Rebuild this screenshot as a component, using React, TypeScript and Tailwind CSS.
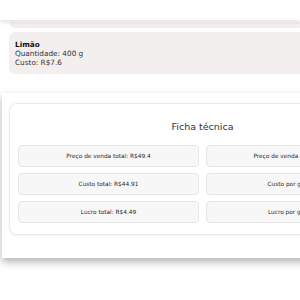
export default function App() {
  const stats = [
    ["Preço de venda total: R$49.4", "Preço de venda por g: R$0.12"],
    ["Custo total: R$44.91", "Custo por g: R$0.11"],
    ["Lucro total: R$4.49", "Lucro por g: R$0.01"],
  ];

  return (
    <div className="relative h-[300px] w-[300px] overflow-hidden bg-white font-['DejaVu_Sans',sans-serif] text-[#222]">
      {/* cabeçalho fixo */}
      <div className="relative z-10 h-[20px] w-full bg-white shadow-[0_2px_4px_rgba(0,0,0,0.12)]" />

      {/* fim do ingrediente anterior */}
      <div className="ml-[9px] mt-[2px] h-[6px] w-[400px] rounded-b-md bg-[#f3efee]" />

      {/* ingrediente */}
      <div className="ml-[9px] mt-[4px] flex h-[42px] w-[400px] flex-col justify-center rounded-md bg-[#f3efee] px-[6px] text-[7.3px] leading-[9px]">
        <span className="font-bold text-[#111]">Limão</span>
        <span className="text-[#333]">Quantidade: 400 g</span>
        <span className="text-[#333]">Custo: R$7.6</span>
      </div>

      {/* painel da ficha técnica */}
      <div className="ml-[2px] mt-[19px] w-[420px] bg-white pb-[23px] pl-[7px] pt-[10px] shadow-[0_4px_8px_rgba(0,0,0,0.3)]">
        <div className="w-[387px] rounded-lg border border-[#ececec] bg-white px-[8px] pb-[11px] pt-[16px] shadow-[0_1px_3px_rgba(0,0,0,0.06)]">
          <h2 className="mb-[11px] text-center text-[9.5px] font-medium leading-[14px] text-[#333]">
            Ficha técnica
          </h2>
          <div className="grid grid-cols-2 gap-x-[7px] gap-y-[6px]">
            {stats.flat().map((s) => (
              <div
                key={s}
                className="flex h-[22px] items-center justify-center rounded border border-[#e6e6e6] bg-[#f7f7f7] text-[5.8px] text-[#2a2a2a]"
              >
                {s}
              </div>
            ))}
          </div>
        </div>
      </div>
    </div>
  );
}
